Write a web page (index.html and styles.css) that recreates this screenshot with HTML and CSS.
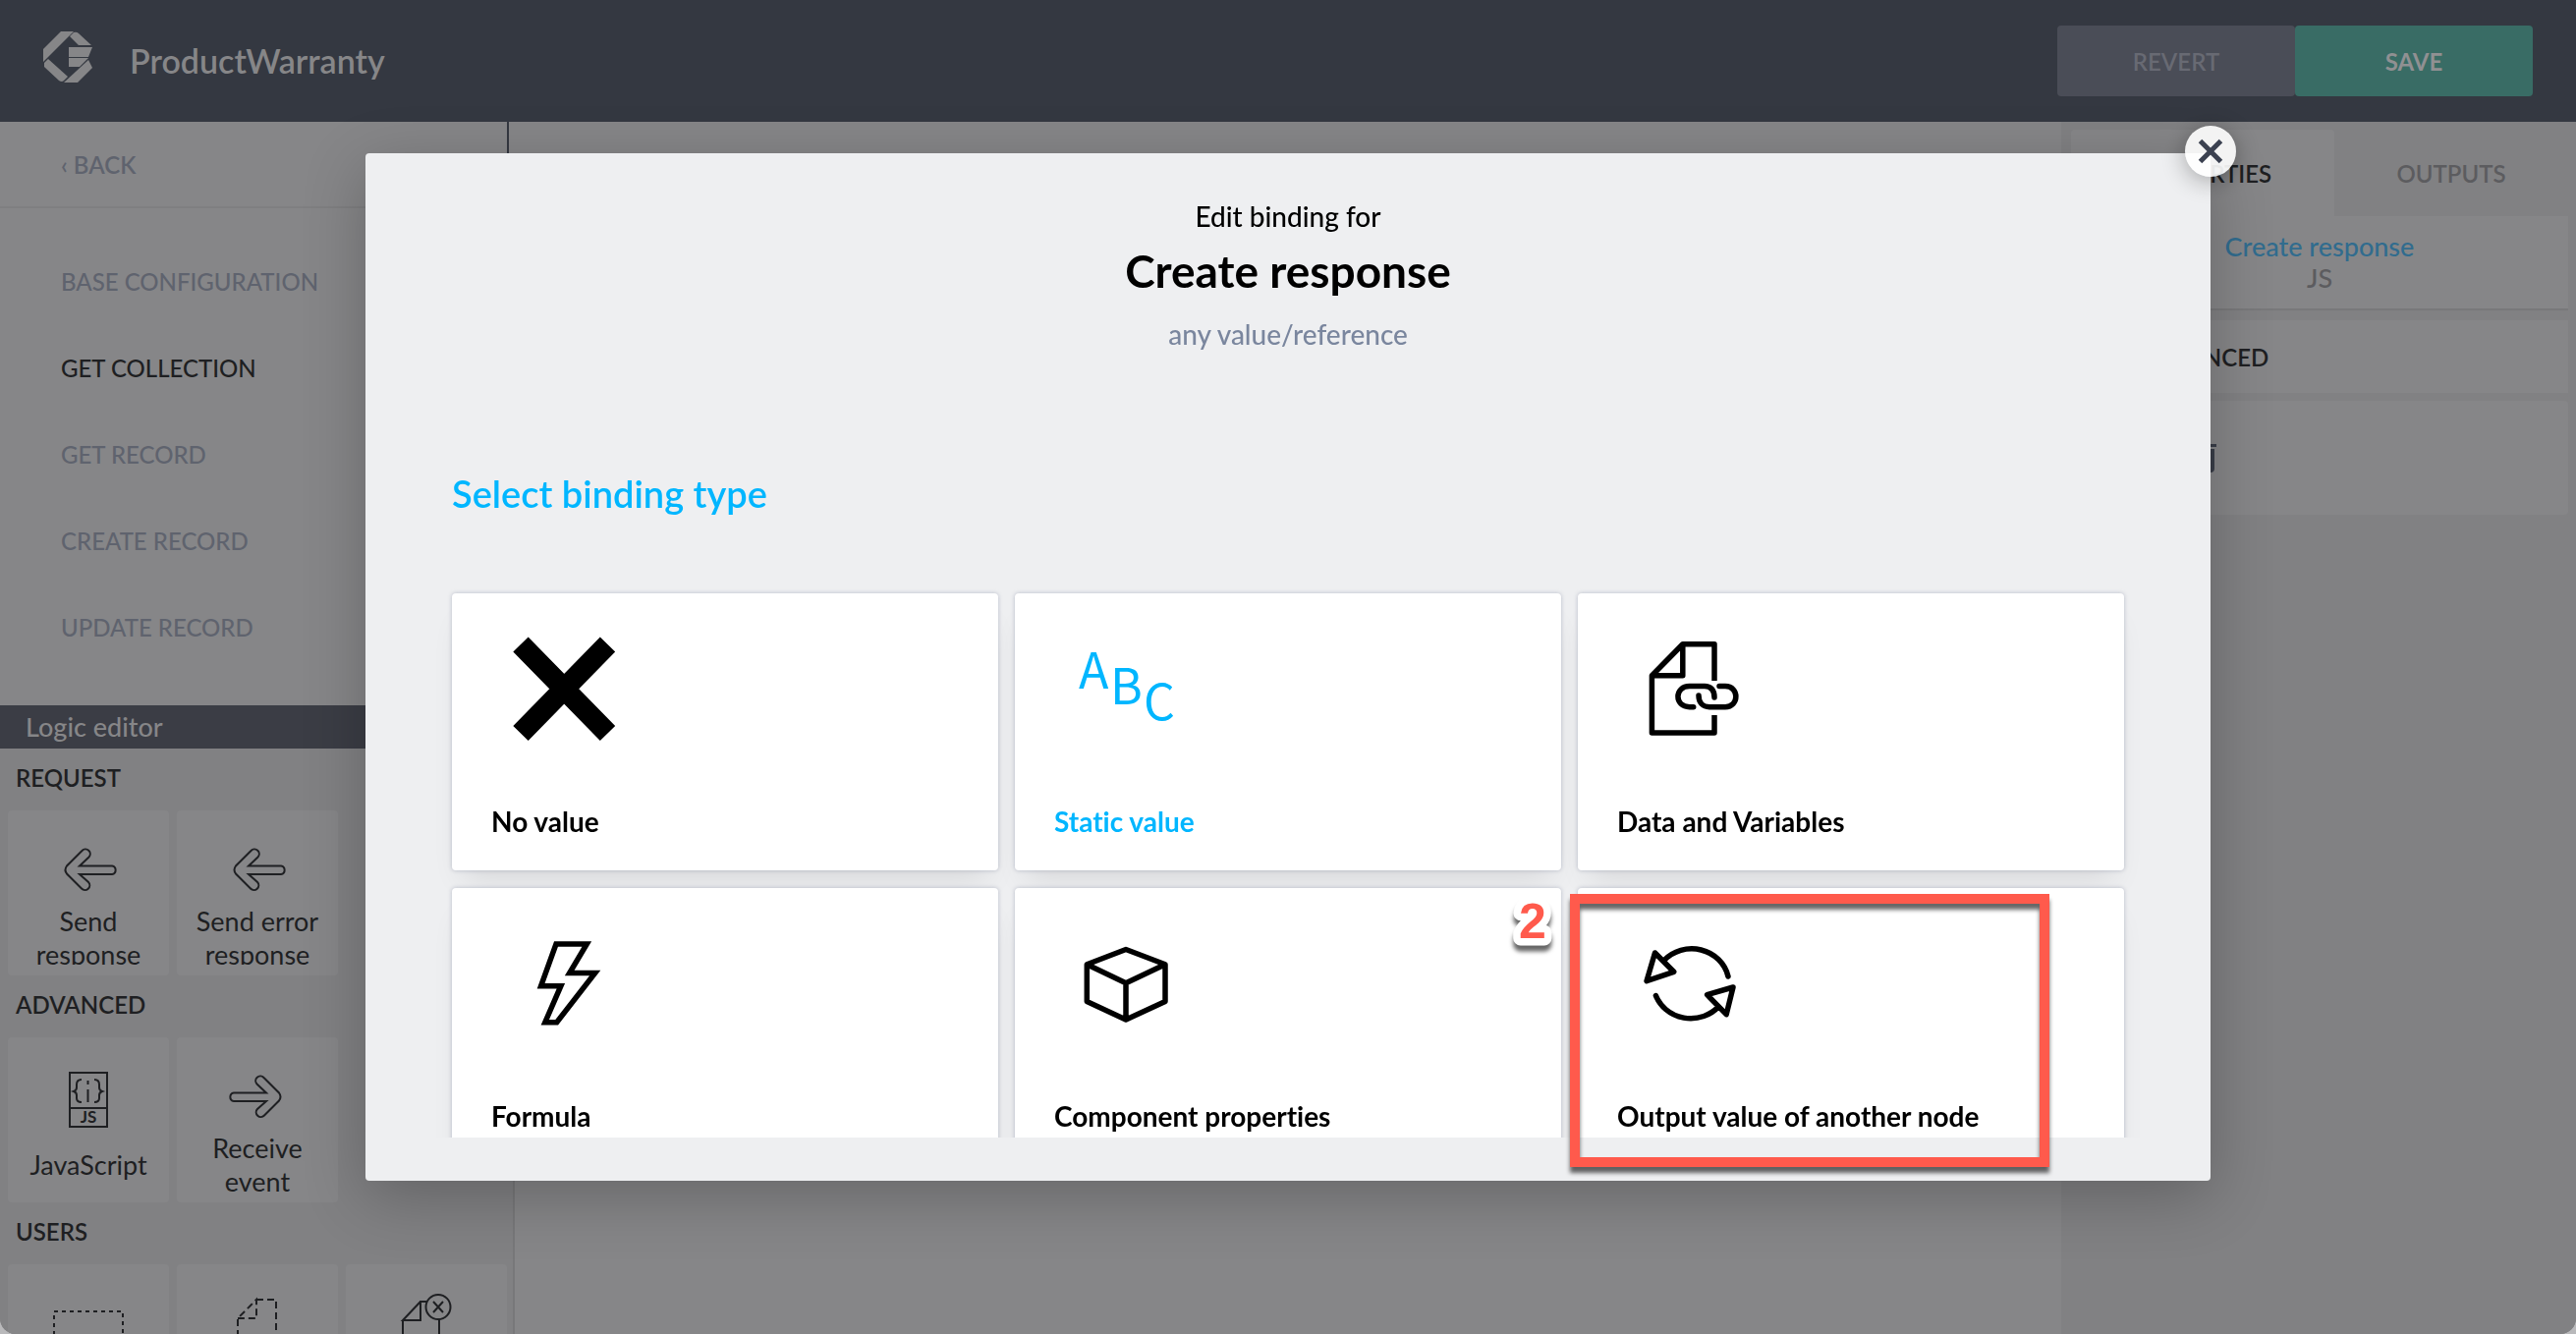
FILE: index.html
```html
<!DOCTYPE html>
<html lang="en">
<head>
<meta charset="utf-8">
<title>ProductWarranty</title>
<link rel="stylesheet" href="styles.css">
</head>
<body>
<div class="app">
  <header class="topbar">
    <svg class="logo" viewBox="0 0 50 52" aria-hidden="true">
      <path d="M18 0H31L0 31V18Z"/>
      <path d="M27 5 31 1Q34 0 36 2L49 14H36Z"/>
      <path d="M26 16H50L46 26H26Z"/>
      <path d="M26 27H46L37 36H26Z"/>
      <path d="M5 28 1 32V36L16 50Q19 52 21 50L25 46Z"/>
      <path d="M46 29 50 37 35 52H21Z"/>
    </svg>
    <h1 class="title">ProductWarranty</h1>
    <div class="actions">
      <button class="btn btn-revert" type="button">REVERT</button>
      <button class="btn btn-save" type="button">SAVE</button>
    </div>
  </header>

  <main class="workspace">
    <div class="sidebar">
      <nav class="nav">
        <a class="back" href="#">‹ BACK</a>
        <ul class="nav-list">
          <li><a href="#">BASE CONFIGURATION</a></li>
          <li><a class="active" href="#">GET COLLECTION</a></li>
          <li><a href="#">GET RECORD</a></li>
          <li><a href="#">CREATE RECORD</a></li>
          <li><a href="#">UPDATE RECORD</a></li>
          <li><a href="#">REPLACE RECORD</a></li>
        </ul>
      </nav>
      <section class="logic">
        <h2 class="logic-title">Logic editor</h2>
        <h3 class="group">REQUEST</h3>
        <div class="tiles">
          <button class="tile" type="button">
            <svg class="tile-icon" viewBox="-4 0 60 46"><path d="M17 18.500 26.500 9.500A4.700 4.700 0 0 0 19.500 3L4 18.500Q1 22.500 4 26.500L19 41.500A4.700 4.700 0 0 0 26 35L17 27H50A4.300 4.300 0 0 0 50 18.500Z"/></svg>
            <span class="tile-label">Send response</span>
          </button>
          <button class="tile" type="button">
            <svg class="tile-icon" viewBox="-4 0 60 46"><path d="M17 18.500 26.500 9.500A4.700 4.700 0 0 0 19.500 3L4 18.500Q1 22.500 4 26.500L19 41.500A4.700 4.700 0 0 0 26 35L17 27H50A4.300 4.300 0 0 0 50 18.500Z"/></svg>
            <span class="tile-label">Send error response</span>
          </button>
        </div>
        <h3 class="group">ADVANCED</h3>
        <div class="tiles">
          <button class="tile" type="button">
            <svg class="tile-icon tall" viewBox="0 0 42 60">
              <path d="M2 2H40V57H2ZM2 38H40"/>
              <path d="M14 9Q9 9 9 14V17Q9 20 6 21Q9 22 9 25V28Q9 32 14 32M27 9Q32 9 32 14V17Q32 20 35 21Q32 22 32 25V28Q32 32 27 32M20.500 10V14M20.500 19V32"/>
              <text class="js" x="21" y="53" text-anchor="middle">JS</text>
            </svg>
            <span class="tile-label">JavaScript</span>
          </button>
          <button class="tile" type="button">
            <svg class="tile-icon" viewBox="4 0 60 46"><path d="M43 18.500 33.500 9.500A4.700 4.700 0 0 1 40.500 3L56 18.500Q59 22.500 56 26.500L41 41.500A4.700 4.700 0 0 1 34 35L43 27H10A4.300 4.300 0 0 1 10 18.500Z"/></svg>
            <span class="tile-label">Receive event</span>
          </button>
        </div>
        <h3 class="group">USERS</h3>
        <div class="tiles">
          <button class="tile" type="button" aria-label="Users list">
            <svg class="tile-icon record" viewBox="0 0 84 70"><path stroke-dasharray="4 4" d="M7 22H77V60H7Z"/></svg>
          </button>
          <button class="tile" type="button" aria-label="Users document">
            <svg class="tile-icon record" viewBox="0 0 84 70"><path stroke-dasharray="7 4" d="M41 10H61V60H22V29L41 10V29H22"/></svg>
          </button>
          <button class="tile" type="button" aria-label="Users removal">
            <svg class="tile-icon record" viewBox="0 0 84 70"><path d="M42 12H36V31H18L36 12M18 31V60H55V30M49 12 59 23M59 12 49 23"/><circle cx="54" cy="17.500" r="12.500"/></svg>
          </button>
        </div>
      </section>
    </div>

    <div class="canvas"></div>

    <aside class="panel">
      <div class="tabs">
        <button class="tab selected" type="button">PROPERTIES</button>
        <button class="tab" type="button">OUTPUTS</button>
      </div>
      <div class="node">
        <a href="#">Create response</a>
        <span>JS</span>
      </div>
      <button class="accordion" type="button">ADVANCED</button>
      <div class="tools">
        <button class="trash" type="button" aria-label="Delete">
          <svg viewBox="0 0 30 30"><path d="M0 1H30V4H0ZM2 6H28V26Q28 30 24 30H6Q2 30 2 26Z"/></svg>
        </button>
      </div>
    </aside>
  </main>
</div>

<div class="backdrop">
  <section class="modal" role="dialog" aria-label="Edit binding">
    <button class="close" type="button" aria-label="Close">
      <svg viewBox="0 0 26 26"><path d="M2.500 2.500 23.500 23.500M23.500 2.500 2.500 23.500"/></svg>
    </button>
    <header class="modal-head">
      <p class="kicker">Edit binding for</p>
      <h2>Create response</h2>
      <p class="hint">any value/reference</p>
    </header>
    <h3 class="select">Select binding type</h3>
    <div class="scroller">
      <div class="cards">
        <button class="card" type="button">
          <svg class="icon" viewBox="54 37 120 120"><path stroke-width="21.500" d="M70 52 158.500 142.500M158.500 52 70 142.500"/></svg>
          <span>No value</span>
        </button>
        <button class="card current" type="button">
          <svg class="icon" viewBox="54 37 120 120"><text class="abc" x="65" y="97">A</text><text class="abc" x="97" y="113">B</text><text class="abc" x="131" y="129">C</text></svg>
          <span>Static value</span>
        </button>
        <button class="card" type="button">
          <svg class="icon" viewBox="54 37 120 120"><path stroke-linejoin="round" d="M139 89V51.700H106.800L75.400 83.700V142H139V124M106.800 51.700V83.700H75.400"/><path stroke-linecap="round" d="M139 106C139 98 135 94.500 129 94.500H113.700C98 94.500 98 115.700 113.700 115.700H117.700M144 94.500H150C164.500 94.500 164.500 115.700 150 115.700H134C127 115.700 123 111 123 104"/></svg>
          <span>Data and Variables</span>
        </button>
        <button class="card" type="button">
          <svg class="icon" viewBox="54 37 120 120"><path d="M106 57H137.300L119.700 86.500H145.700L106.700 136.700H94.800L110.900 99.700H90.600Z"/></svg>
          <span>Formula</span>
        </button>
        <button class="card" type="button">
          <svg class="icon" viewBox="54 37 120 120"><path stroke-linejoin="round" d="M113 62.500 153 77.700V115.500L113 134 73.300 115.500V77.700ZM73.300 77.700 113 96.700 153 77.700M113 96.700V134"/></svg>
          <span>Component properties</span>
        </button>
        <button class="card" type="button">
          <svg class="icon" viewBox="54 37 120 120"><path stroke-linecap="round" stroke-linejoin="round" d="M87.500 74A38 36 0 0 1 153 90M79.400 109.500A38 36 0 0 0 143 121M78.500 66 97.700 85.300 70 94.700ZM158 101 131.600 108.700 151.200 128.700Z"/></svg>
          <span>Output value of another node</span>
        </button>
      </div>
    </div>
    <div class="marker"></div>
    <svg class="step" viewBox="0 0 56 64"><text x="28" y="51" text-anchor="middle">2</text></svg>
  </section>
</div>
</body>
</html>
```
FILE: styles.css
```css
*, *::before, *::after { box-sizing: border-box; }

body {
  margin: 0;
  background: #b9b9bb;
  font-family: Lato, "Liberation Sans", sans-serif;
  font-size: 28px;
  font-variant-ligatures: none;
  color: #000;
}
h1, h2, h3, p, ul { margin: 0; padding: 0; font-weight: 500; }
ul { list-style: none; }
a { color: inherit; text-decoration: none; }
button { margin: 0; padding: 0; border: 0; background: none; font: inherit; font-variant-ligatures: none; color: inherit; }
svg { display: block; flex: none; }

.app {
  display: flex;
  flex-direction: column;
  height: 100vh;
  overflow: hidden;
  border-radius: 0 0 16px 16px;
  background: #868688;
}

/* Top bar */
.topbar {
  display: flex;
  align-items: center;
  flex: none;
  height: 124px;
  padding: 0 44px;
  background: #343841;
}
.logo { width: 50px; height: 52px; margin-bottom: 8px; fill: #868688; }
.title { margin-left: 38px; font-size: 34px; font-weight: 600; line-height: 40px; color: #868688; }
.actions { display: flex; margin-left: auto; }
.btn { width: 242px; height: 72px; border-radius: 4px; font-size: 24px; font-weight: 600; }
.btn-revert { background: #4a4d57; color: #686a73; }
.btn-save { background: #396c65; color: #909092; font-weight: 700; }

/* Workspace */
.workspace { display: flex; flex: 1; min-height: 0; }
.sidebar { display: flex; flex-direction: column; flex: none; width: 524px; }
.nav {
  flex: none;
  height: 594px;
  margin-right: 6px;
  overflow: hidden;
  border-right: 2px solid #343841;
  font-size: 24px;
  font-weight: 600;
  color: #5f636e;
}
.back {
  display: flex;
  align-items: center;
  height: 88px;
  padding-left: 62px;
  border-bottom: 2px solid #7f7f81;
}
.nav-list { padding-top: 30px; }
.nav-list a { display: flex; align-items: center; height: 88px; padding-left: 62px; }
.nav-list .active { color: #1e1f22; }

.logic { flex: 1; min-height: 0; overflow: hidden; border-right: 2px solid #78787a; background: #818183; }
.logic-title {
  margin-right: -2px;
  padding-left: 26px;
  background: #3b3d45;
  color: #868688;
  font-size: 27px;
  line-height: 44px;
}
.group { padding-left: 16px; font-size: 24px; font-weight: 600; line-height: 60px; color: #1e1f22; }
.tiles { display: grid; grid-template-columns: repeat(3, 1fr); gap: 8px; margin-top: 3px; padding: 0 6px 0 8px; }
.tile {
  display: flex;
  flex-direction: column;
  align-items: center;
  height: 168px;
  border-radius: 4px;
  background: #868688;
  color: #1e1f22;
  font-size: 27px;
  line-height: 34px;
}
.tile-icon { width: 60px; height: 46px; margin: 38px 0 12px; fill: none; stroke: #1e1f22; stroke-width: 2; }
.tile-icon.tall { width: 42px; height: 60px; margin: 34px 0 2px; }
.tile-icon.record { width: 84px; height: 70px; margin: 26px 0 0; }
.js { fill: #1e1f22; stroke: none; font-family: Lato, sans-serif; font-size: 17px; font-weight: 700; }
.tile-label { display: flex; align-items: center; justify-content: center; width: 140px; height: 68px; clip-path: inset(0 0 7px); }

.canvas { flex: 1; }

/* Properties panel */
.panel { flex: none; width: 524px; padding: 8px 8px 0 10px; background: #818183; }
.tabs { display: grid; grid-template-columns: 268px 1fr; }
.tab { height: 88px; border-radius: 4px 4px 0 0; font-size: 24px; font-weight: 600; color: #5c5c5f; }
.tab.selected { background: #868688; color: #1e1f22; }
.node {
  display: flex;
  flex-direction: column;
  align-items: center;
  height: 96px;
  padding-top: 15px;
  border-bottom: 2px solid #78787a;
  background: #868688;
  color: #5c5c5f;
  font-size: 27px;
  font-weight: 500;
  line-height: 32px;
}
.node a { color: #316c8e; }
.accordion {
  display: block;
  width: 100%;
  height: 74px;
  margin: 10px 0 8px;
  padding-left: 69px;
  background: #868688;
  color: #1e1f22;
  font-size: 24px;
  font-weight: 600;
  text-align: left;
}
.tools { height: 116px; padding: 43px 0 0 118px; border-radius: 4px; background: #868688; }
.trash svg { width: 30px; height: 30px; fill: #3a3e49; }

/* Dialog */
.backdrop { position: fixed; inset: 0; display: flex; padding: 156px 372px; }
.modal {
  position: relative;
  display: flex;
  flex-direction: column;
  flex: 1;
  padding: 44px 0;
  border-radius: 4px;
  background: #eeeff1;
  box-shadow: 0 16px 64px rgba(0, 0, 0, .24);
}
.close {
  position: absolute;
  top: -28px;
  right: -26px;
  display: grid;
  place-items: center;
  width: 52px;
  height: 52px;
  border-radius: 50%;
  background: rgba(255, 255, 255, .9);
  box-shadow: 0 4px 24px rgba(0, 0, 0, .32);
}
.close svg { width: 26px; height: 26px; fill: none; stroke: #3b4150; stroke-width: 5; }
.modal-head { text-align: center; line-height: 40px; }
.modal-head h2 { font-size: 46px; font-weight: 700; line-height: 72px; }
.hint { line-height: 56px; color: #7a869e; }
.select { margin-top: 108px; padding-left: 88px; color: #00b6ff; font-size: 38px; font-weight: 600; line-height: 52px; }
.scroller { flex: 1; min-height: 0; margin: 48px 60px 0; padding: 28px 28px 0; overflow: hidden; }
.cards { display: grid; grid-template-columns: repeat(3, 1fr); gap: 18px 17px; }
.card {
  display: flex;
  flex-direction: column;
  align-items: flex-start;
  height: 282px;
  padding: 37px 40px;
  border-radius: 4px;
  background: #fff;
  box-shadow: 0 0 4px rgba(100, 110, 140, .4), 0 20px 30px -12px rgba(0, 0, 0, .1);
  font-weight: 700;
  line-height: 38px;
}
.card.current { color: #00b6ff; }
.icon { width: 120px; height: 120px; margin: 0 0 56px 14px; fill: none; stroke: currentColor; stroke-width: 5.500; }
.abc { fill: currentColor; stroke: none; font-family: "Noto Sans CJK SC", sans-serif; font-size: 50px; font-weight: 400; }

/* Tutorial callout over the dialog */
.marker {
  position: absolute;
  right: 164px;
  bottom: 14px;
  width: 488px;
  height: 278px;
  border: 10px solid #ff5a4c;
  filter: drop-shadow(0 6px 2px rgba(0, 0, 0, .6));
}
.step {
  position: absolute;
  right: 662px;
  bottom: 234px;
  width: 56px;
  height: 64px;
  overflow: visible;
  fill: #ff5a4c;
  stroke: #fff;
  stroke-width: 15;
  stroke-linejoin: round;
  paint-order: stroke;
  font-family: "Liberation Sans", sans-serif;
  font-size: 50px;
  font-weight: 700;
  filter: drop-shadow(0 6px 2px rgba(0, 0, 0, .6));
}
```
